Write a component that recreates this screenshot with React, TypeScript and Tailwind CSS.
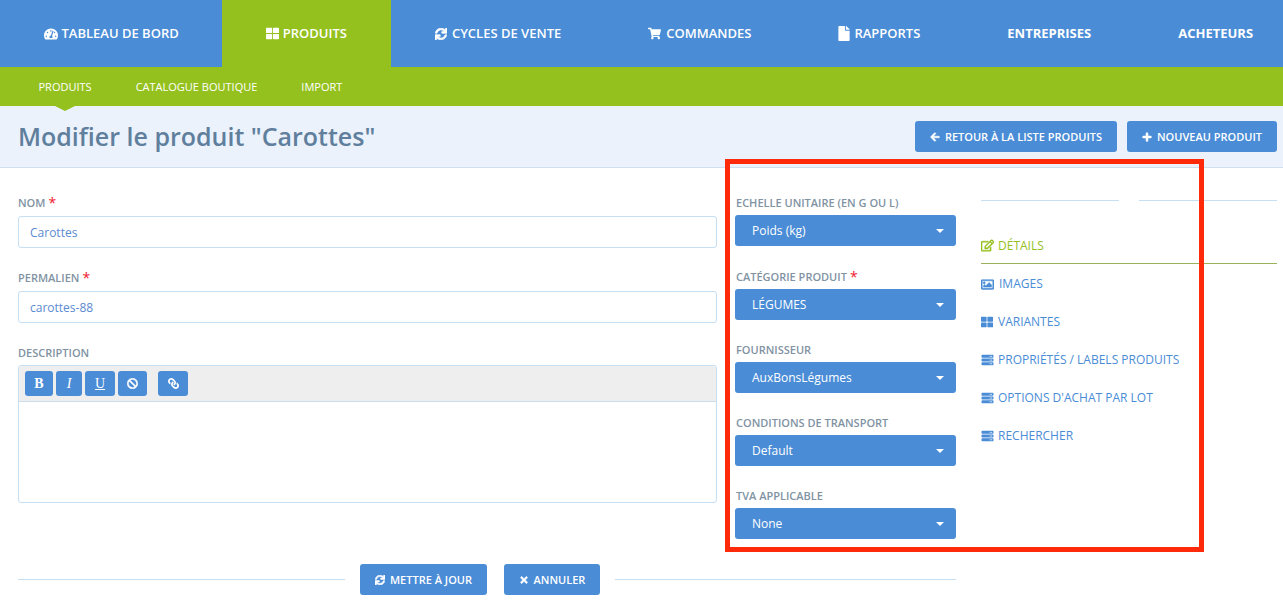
import { ReactNode } from 'react'
import {
  FaArrowLeft,
  FaBan,
  FaFile,
  FaLink,
  FaPlus,
  FaRegEdit,
  FaRegImage,
  FaServer,
  FaShoppingCart,
  FaSync,
  FaTachometerAlt,
  FaThLarge,
  FaTimes,
} from 'react-icons/fa'

const navItems = [
  { label: 'TABLEAU DE BORD', icon: <FaTachometerAlt className="w-[14px] h-[14px]" />, gap: 'gap-[4px]' },
  { label: 'PRODUITS', icon: <FaThLarge className="w-[13px] h-[13px]" />, active: true, gap: 'gap-[4px] pr-[44.5px]' },
  { label: 'CYCLES DE VENTE', icon: <FaSync className="w-[12px] h-[12px] stroke-[30]" />, gap: 'gap-[5px]' },
  { label: 'COMMANDES', icon: <FaShoppingCart className="w-[13px] h-[13px]" />, gap: 'gap-[5px]' },
  { label: 'RAPPORTS', icon: <FaFile className="w-[12px] h-[15px]" />, gap: 'gap-[4px]' },
  { label: 'ENTREPRISES', bold: true, gap: '' },
  { label: 'ACHETEURS', bold: true, gap: '' },
]

const selects = [
  { label: 'ECHELLE UNITAIRE (EN G OU L)', value: 'Poids (kg)', height: 'h-[74px]' },
  { label: 'CATÉGORIE PRODUIT', value: 'LÉGUMES', required: true, height: 'h-[73px]' },
  { label: 'FOURNISSEUR', value: 'AuxBonsLégumes', height: 'h-[73px]' },
  { label: 'CONDITIONS DE TRANSPORT', value: 'Default', height: 'h-[73px]' },
  { label: 'TVA APPLICABLE', value: 'None', height: 'h-[73px]' },
]

const sideLinks = [
  { label: 'IMAGES', icon: <FaRegImage className="w-[13px] h-[13px] stroke-[20]" />, gap: 'gap-[5px]' },
  { label: 'VARIANTES', icon: <FaThLarge className="w-[12px] h-[12px]" />, gap: 'gap-[5px]' },
  { label: 'PROPRIÉTÉS / LABELS PRODUITS', icon: <FaServer className="w-[13px] h-[12px]" />, gap: 'gap-[4px]' },
  { label: "OPTIONS D'ACHAT PAR LOT", icon: <FaServer className="w-[13px] h-[12px]" />, gap: 'gap-[4px]' },
  { label: 'RECHERCHER', icon: <FaServer className="w-[13px] h-[12px]" />, gap: 'gap-[4px]' },
]

const FieldLabel = ({ children, required }: { children: ReactNode; required?: boolean }) => (
  <div className="flex items-start h-[14px] text-[11px] leading-[14px] font-semibold text-[#7f93a3]">
    {children}
    {required && <span className="ml-[3px] text-[14px] leading-[14px] font-normal text-[#f0202e]">*</span>}
  </div>
)

const ActionButton = ({ icon, label, className }: { icon: ReactNode; label: string; className: string }) => (
  <button className={`flex items-center justify-center gap-[5px] h-[31px] pt-px rounded-[3px] bg-[#4a8cd6] text-white text-[11px] font-semibold ${className}`}>
    {icon}
    {label}
  </button>
)

const ToolButton = ({ children, className }: { children: ReactNode; className: string }) => (
  <button className={`flex items-center justify-center h-[25px] rounded-[3px] bg-[#4a8cd6] text-white ${className}`}>
    {children}
  </button>
)

export default function App() {
  return (
    <div className="relative w-[1283px] h-[606px] overflow-hidden bg-white font-['Open_Sans',sans-serif]">
      {/* Main nav */}
      <div className="flex h-[67px] bg-[#4a8cd6] text-white text-[13px]">
        {navItems.map((item) => (
          <div
            key={item.label}
            className={`flex shrink-0 items-center pl-[43.5px] pr-[43.5px] ${item.gap} ${item.active ? 'bg-[#95c11f]' : ''} ${item.bold ? 'font-bold' : 'font-semibold'}`}
          >
            {item.icon}
            {item.label}
          </div>
        ))}
      </div>

      {/* Sub nav */}
      <div className="relative flex items-center gap-[44px] h-[39px] pl-[38.5px] pt-px bg-[#95c11f] text-white text-[11px] font-medium">
        <span>PRODUITS</span>
        <span>CATALOGUE BOUTIQUE</span>
        <span>IMPORT</span>
        <div className="absolute left-[55px] top-[39px] w-0 h-0 border-x-[10px] border-x-transparent border-t-[5px] border-t-[#95c11f]" />
      </div>

      {/* Page header */}
      <div className="flex items-center justify-between h-[62px] pl-[18px] pr-[6px] bg-[#ebf2fc] border-b border-[#cfdff0]">
        <h1 className="text-[25px] font-semibold text-[#5f7f9c]">Modifier le produit "Carottes"</h1>
        <div className="flex gap-[10px]">
          <ActionButton icon={<FaArrowLeft className="w-[10px] h-[10px] stroke-[30]" />} label="RETOUR À LA LISTE PRODUITS" className="w-[202px]" />
          <ActionButton icon={<FaPlus className="w-[10px] h-[10px] stroke-[30]" />} label="NOUVEAU PRODUIT" className="w-[150px]" />
        </div>
      </div>

      {/* Form */}
      <div className="flex pl-[18px]">
        <div className="w-[938px]">
          <div className="flex gap-[18px]">
            <div className="w-[699px] pt-[28px]">
              <FieldLabel required>NOM</FieldLabel>
              <input
                readOnly
                value="Carottes"
                className="block w-full h-[32px] mt-[6px] px-[11px] rounded-[3px] border border-[#c5dff5] text-[12px] text-[#5b8bd0]"
              />
              <div className="mt-[23px]">
                <FieldLabel required>PERMALIEN</FieldLabel>
              </div>
              <input
                readOnly
                value="carottes-88"
                className="block w-full h-[32px] mt-[6px] px-[11px] rounded-[3px] border border-[#c5dff5] text-[12px] text-[#5b8bd0]"
              />
              <div className="mt-[23px]">
                <FieldLabel>DESCRIPTION</FieldLabel>
              </div>
              <div className="mt-[5px] h-[138px] rounded-[3px] border border-[#c5dff5] overflow-hidden">
                <div className="flex items-center h-[36px] pl-[6px] bg-[#eeeeee] border-b border-[#cfdcea]">
                  <div className="flex gap-[3px]">
                    <ToolButton className="w-[28px] font-['Liberation_Serif',serif] text-[14px] font-bold">B</ToolButton>
                    <ToolButton className="w-[26px] font-['Liberation_Serif',serif] text-[14px] italic">I</ToolButton>
                    <ToolButton className="w-[30px] font-['Liberation_Serif',serif] text-[14px] underline">U</ToolButton>
                    <ToolButton className="w-[29px]"><FaBan className="w-[11px] h-[11px] stroke-[20]" /></ToolButton>
                  </div>
                  <ToolButton className="w-[30px] ml-[11px]"><FaLink className="w-[11px] h-[11px] -scale-x-100" /></ToolButton>
                </div>
              </div>
            </div>

            <div className="w-[221px] pt-[28px]">
              {selects.map((select) => (
                <div key={select.label} className={select.height}>
                  <div className="pl-px">
                    <FieldLabel required={select.required}>{select.label}</FieldLabel>
                  </div>
                  <div className="flex items-center justify-between h-[31px] mt-[5px] pl-[17px] pr-[12px] rounded-[3px] bg-[#4a8cd6] text-white text-[12px] font-medium">
                    {select.value}
                    <div className="w-0 h-0 border-x-[4px] border-x-transparent border-t-[4px] border-t-white" />
                  </div>
                </div>
              ))}
            </div>
          </div>

          {/* Form actions */}
          <div className="flex items-center mt-[2px]">
            <div className="flex-1 h-px bg-[#c5dff5]" />
            <div className="flex gap-[17px] mx-[15px]">
              <ActionButton icon={<FaSync className="w-[10px] h-[10px] stroke-[30]" />} label="METTRE À JOUR" className="w-[127px]" />
              <ActionButton icon={<FaTimes className="w-[10px] h-[10px] stroke-[30]" />} label="ANNULER" className="w-[96px]" />
            </div>
            <div className="w-[341px] h-px bg-[#c5dff5]" />
          </div>
        </div>

        {/* Side tabs */}
        <div className="w-[296px] ml-[25px] pt-[32px] text-[12px] font-medium text-[#4a8cd6]">
          <div className="flex justify-between">
            <div className="w-[138px] h-px bg-[#c5dff5]" />
            <div className="w-[138px] h-px bg-[#c5dff5]" />
          </div>
          <div className="flex items-center gap-[4px] h-[38px] mt-[25px] mb-px pt-[2px] border-b border-[#9ab35a] text-[#95c11f]">
            <FaRegEdit className="w-[13px] h-[13px] stroke-[20]" />
            DÉTAILS
          </div>
          {sideLinks.map((link) => (
            <div key={link.label} className={`flex items-center h-[38px] ${link.gap}`}>
              {link.icon}
              {link.label}
            </div>
          ))}
        </div>
      </div>

      {/* Red highlight */}
      <div className="absolute left-[725px] top-[159px] w-[479px] h-[393px] border-[5px] border-[#ff2a0a]" />
    </div>
  )
}
